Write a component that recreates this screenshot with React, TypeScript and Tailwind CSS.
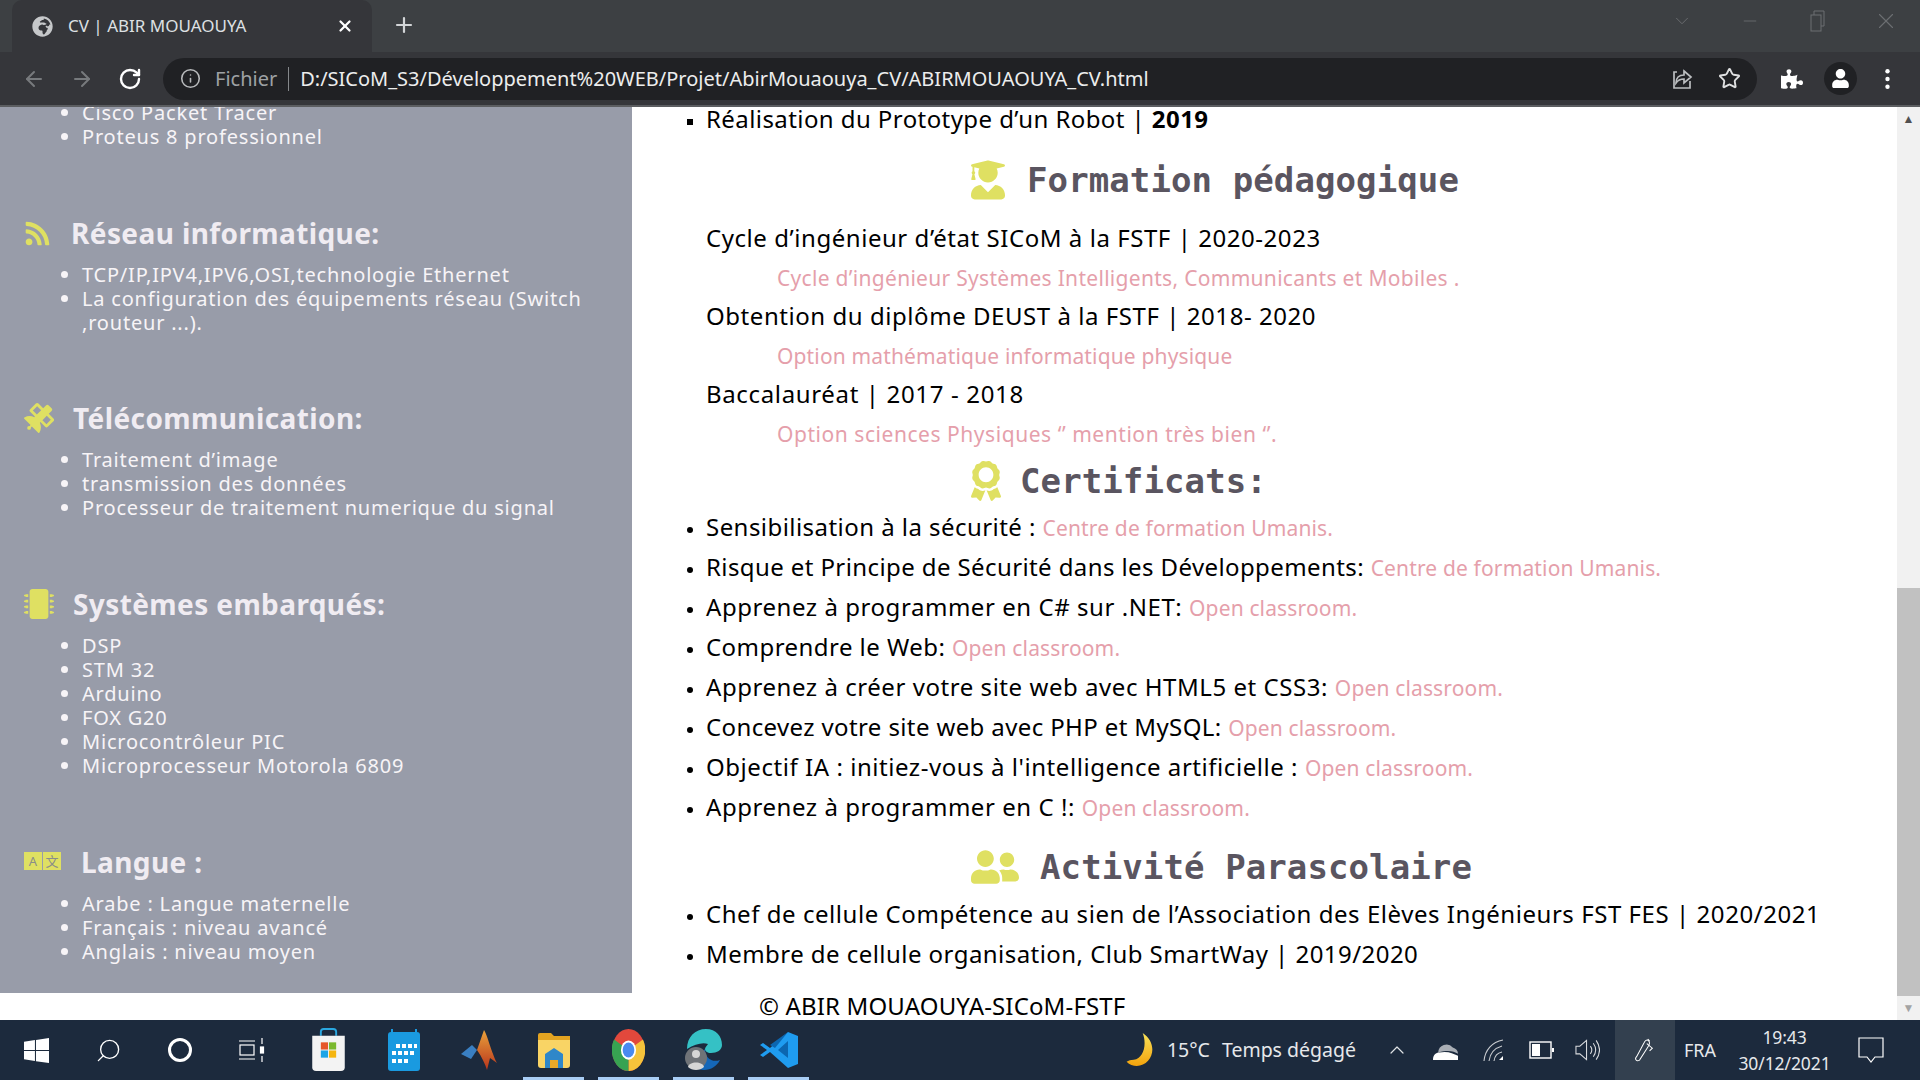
import React from "react";
import { ArrowLeft, ArrowRight, RotateCw, Info, Star, Plus, X, ChevronDown, ChevronUp, Minus, Search } from "lucide-react";
import { FaRss, FaSatellite, FaMicrochip, FaUserGraduate, FaAward, FaUserFriends, FaGlobeAfrica, FaPuzzlePiece, FaUser } from "react-icons/fa";

const sections = [
  { title: "Réseau informatique:", icon: <FaRss className="w-[27px] h-[27px] text-[#dfe062]" />, w: "w-[37px]", mt: "mt-[64px]", items: ["TCP/IP,IPV4,IPV6,OSI,technologie Ethernet", "La configuration des équipements réseau (Switch ,routeur ...)."] },
  { title: "Télécommunication:", icon: <FaSatellite className="w-[30px] h-[30px] text-[#dfe062]" />, w: "w-[39px]", mt: "mt-[63px]", items: ["Traitement d’image", "transmission des données", "Processeur de traitement numerique du signal"] },
  { title: "Systèmes embarqués:", icon: <FaMicrochip className="w-[30px] h-[30px] text-[#dfe062]" />, w: "w-[39px]", mt: "mt-[64px]", items: ["DSP", "STM 32", "Arduino", "FOX G20", "Microcontrôleur PIC", "Microprocesseur Motorola 6809"] },
];

const certs = [
  ["Sensibilisation à la sécurité : ", "Centre de formation Umanis.", "tracking-[0.45px]"],
  ["Risque et Principe de Sécurité dans les Développements: ", "Centre de formation Umanis.", "tracking-[0.4px]"],
  ["Apprenez à programmer en C# sur .NET: ", "Open classroom.", "tracking-[0.55px]"],
  ["Comprendre le Web: ", "Open classroom.", "tracking-[0.45px]"],
  ["Apprenez à créer votre site web avec HTML5 et CSS3: ", "Open classroom.", "tracking-[0.55px]"],
  ["Concevez votre site web avec PHP et MySQL: ", "Open classroom.", "tracking-[0.38px]"],
  ["Objectif IA : initiez-vous à l'intelligence artificielle : ", "Open classroom.", "tracking-[0.55px]"],
  ["Apprenez à programmer en C !: ", "Open classroom.", "tracking-[0.55px]"],
];

function Sidebar() {
  return (
    <aside className="w-[632px] h-[886px] bg-[#989ca9] overflow-hidden text-[#f7f4f7] text-[20px] leading-[24px] font-['Noto_Sans',sans-serif] tracking-[0.8px]">
      <ul className="list-disc pl-[82px] -mt-[6px]">
        <li>Cisco Packet Tracer</li>
        <li>Proteus 8 professionnel</li>
      </ul>
      {sections.map((s) => (
        <section key={s.title} className={s.mt}>
          <h2 className="h-[40px] flex items-center pl-[24px] gap-[10px] text-[28px] tracking-[0.4px] font-bold text-[#f0ecf2]">
            <span className={`${s.w} flex`}>{s.icon}</span>
            {s.title}
          </h2>
          <ul className="list-disc pl-[82px] mt-[10px] pr-[40px]">
            {s.items.map((i) => <li key={i}>{i}</li>)}
          </ul>
        </section>
      ))}
      <section className="mt-[64px]">
        <h2 className="h-[40px] flex items-center pl-[24px] gap-[10px] text-[28px] tracking-[0.4px] font-bold text-[#f0ecf2]">
          <span className="w-[47px] flex gap-[1px] text-[13px] leading-[18px] tracking-normal font-normal text-[#8a8d8a] text-center -mt-[2px]">
            <span className="w-[18px] h-[18px] bg-[#dfe062]">A</span>
            <span className="w-[18px] h-[18px] bg-[#dfe062] font-['Noto_Sans_CJK_SC',sans-serif]">文</span>
          </span>
          Langue :
        </h2>
        <ul className="list-disc pl-[82px] mt-[10px]">
          <li>Arabe : Langue maternelle</li>
          <li>Français : niveau avancé</li>
          <li>Anglais : niveau moyen</li>
        </ul>
      </section>
    </aside>
  );
}

function Heading({ icon, text, className }: { icon: React.ReactNode; text: string; className: string }) {
  return (
    <h2 className={`h-[44px] flex items-center text-[34px] font-bold text-[#5a5560] font-['DejaVu_Sans_Mono',monospace] tracking-[0.1px] ${className}`}>
      {icon}
      {text}
    </h2>
  );
}

const pink = "h-[38px] pl-[71px] text-[21px] leading-[40px] text-[#e59fab]";

function Main() {
  return (
    <main className="flex-1 h-full bg-white text-black text-[24px] leading-[40px] font-['Noto_Sans',sans-serif] tracking-[0.55px]">
      <ul className="list-[square] ml-[74px] marker:text-[18px]">
        <li className="h-[24px] leading-[24px] tracking-[0.42px]">Réalisation du Prototype d’un Robot | <b>2019</b></li>
      </ul>
      <Heading className="mt-[27px] pl-[339px] gap-[22px]" icon={<FaUserGraduate className="w-[34px] h-[40px] text-[#dfe062]" />} text="Formation pédagogique" />
      <div className="pl-[74px] mt-[16px]">
        <p>Cycle d’ingénieur d’état SICoM à la FSTF | 2020-2023</p>
        <p className={`${pink} tracking-[0.3px]`}>Cycle d’ingénieur Systèmes Intelligents, Communicants et Mobiles .</p>
        <p className="h-[40px]">Obtention du diplôme DEUST à la FSTF | 2018- 2020</p>
        <p className={`${pink} tracking-[0.15px]`}>Option mathématique informatique physique</p>
        <p className="h-[40px] tracking-[0.65px]">Baccalauréat | 2017 - 2018</p>
        <p className={`${pink} tracking-[0.55px]`}>Option sciences Physiques ‘’ mention très bien ‘’.</p>
      </div>
      <Heading className="mt-[7px] pl-[339px] gap-[19px]" icon={<FaAward className="w-[30px] h-[40px] text-[#dfe062]" />} text="Certificats:" />
      <ul className="list-disc ml-[74px] mt-[4px] marker:text-[18px]">
        {certs.map(([a, b, t]) => (
          <li key={a} className={t}>{a}<span className="text-[21px] leading-none tracking-[0.15px] text-[#e59fab]">{b}</span></li>
        ))}
      </ul>
      <Heading className="mt-[18px] pl-[339px] gap-[21px]" icon={<FaUserFriends className="w-[48px] h-[40px] text-[#dfe062]" />} text="Activité Parascolaire" />
      <ul className="list-disc ml-[74px] mt-[5px] marker:text-[18px]">
        <li className="whitespace-nowrap">Chef de cellule Compétence au sien de l’Association des Elèves Ingénieurs FST FES | 2020/2021</li>
        <li className="tracking-[0.45px]">Membre de cellule organisation, Club SmartWay | 2019/2020</li>
      </ul>
      <p className="pl-[127px] mt-[12px] tracking-[0.15px]">© ABIR MOUAOUYA-SICoM-FSTF</p>
    </main>
  );
}

function Scrollbar() {
  return (
    <div className="w-[23px] h-full bg-[#f1f1f1] flex flex-col items-center">
      <div className="h-[24px] flex items-center text-[#505050] text-[12px] leading-none">▲</div>
      <div className="h-[457px] shrink-0" />
      <div className="w-full flex-1 bg-[#c1c1c1]" />
      <div className="h-[24px] flex items-center text-[#a3a3a3] text-[12px] leading-none">▼</div>
    </div>
  );
}

function TabBar() {
  return (
    <div className="h-[52px] bg-[#3d4043] flex relative text-[#dde0e3] font-['Noto_Sans',sans-serif]">
      <div className="ml-[12px] w-[360px] h-[52px] bg-[#35363a] rounded-t-[10px] flex items-center px-[20px] text-[17px]">
        <FaGlobeAfrica className="w-[21px] h-[21px] text-[#c6c8ca]" />
        <span className="ml-[15px]">CV | ABIR MOUAOUYA</span>
        <X className="ml-auto -mr-[2px] w-[18px] h-[18px] text-white" strokeWidth={3} />
      </div>
      <Plus className="ml-[20px] mt-[13px] w-[24px] h-[24px] text-[#d3d5d7]" strokeWidth={2.2} />
      <div className="ml-auto flex items-center text-[#6c6f72] h-[42px]">
        <div className="w-[68px] flex justify-center"><ChevronDown className="w-[22px] h-[22px]" strokeWidth={1} /></div>
        <div className="w-[68px] flex justify-center"><Minus className="w-[20px] h-[20px]" strokeWidth={1} /></div>
        <div className="w-[68px] flex justify-center">
          <svg viewBox="0 0 16 22" className="w-[16px] h-[24px]" fill="none" stroke="currentColor" strokeWidth="1"><rect x="1" y="5" width="10" height="16" /><path d="M4 5V1h10v15h-3" /></svg>
        </div>
        <div className="w-[68px] flex justify-center"><X className="w-[26px] h-[26px]" strokeWidth={1} /></div>
      </div>
    </div>
  );
}

function Toolbar() {
  return (
    <div className="h-[55px] bg-[#35363a] border-b-2 border-[#5b5d60] flex items-center font-['Noto_Sans',sans-serif]">
      <ArrowLeft className="ml-[22px] w-[24px] h-[24px] text-[#777a7d]" strokeWidth={2} />
      <ArrowRight className="ml-[24px] w-[24px] h-[24px] text-[#777a7d]" strokeWidth={2} />
      <RotateCw className="ml-[24px] w-[24px] h-[24px] text-white" strokeWidth={2.4} />
      <div className="ml-[21px] w-[1594px] h-[42px] bg-[#202124] rounded-full flex items-center text-[20px] text-[#eceded]">
        <Info className="ml-[17px] w-[21px] h-[21px] text-[#b8babc]" strokeWidth={1.8} />
        <span className="ml-[14px] text-[#9ea1a4]">Fichier</span>
        <span className="mx-[11px] w-px h-[24px] bg-[#85888b]" />
        <span>D:/SICoM_S3/Développement%20WEB/Projet/AbirMouaouya_CV/ABIRMOUAOUYA_CV.html</span>
        <svg viewBox="0 0 24 24" className="ml-auto w-[24px] h-[24px] text-[#bcbec0]" fill="none" stroke="currentColor" strokeWidth="1.7"><path d="M7 5H4v16h16v-7" /><path d="M14 4l7 6-7 6v-4c-4 0-6 1-8 4 0-5 3-8 8-8z" /></svg>
        <Star className="ml-[24px] mr-[16px] w-[23px] h-[23px] text-[#dfe0e1]" strokeWidth={2} />
      </div>
      <FaPuzzlePiece className="ml-[24px] w-[22px] h-[22px] text-white" />
      <span className="ml-[21px] w-[33px] h-[33px] rounded-full bg-[#202124] flex items-center justify-center">
        <FaUser className="w-[17px] h-[19px] text-white" />
      </span>
      <svg viewBox="0 0 4 20" className="ml-[28px] w-[5px] h-[22px] text-white" fill="currentColor"><circle cx="2" cy="3" r="2" /><circle cx="2" cy="10" r="2" /><circle cx="2" cy="17" r="2" /></svg>
    </div>
  );
}

const small = "w-[72px] h-full flex items-center justify-center shrink-0";
const tile = "w-[75px] h-full flex items-center justify-center shrink-0";
const running = "relative w-[75px] h-full flex items-center justify-center shrink-0";

function Taskbar() {
  return (
    <div className="h-[60px] bg-[#1c2a3d] flex items-center text-[#e6e8eb] font-['Noto_Sans',sans-serif]">
      <div className="flex h-full">
        <div className={small}>
          <svg viewBox="0 0 24 24" className="w-[25px] h-[25px]" fill="#fff"><path d="M0 3.5L10.5 2v9.5H0zM11.5 1.8L24 0v11.5H11.5zM0 12.5h10.5V22L0 20.5zM11.5 12.5H24V24l-12.5-1.8z" /></svg>
        </div>
        <div className={small}><Search className="w-[27px] h-[27px] text-white -scale-x-100" strokeWidth={1.2} /></div>
        <div className={small}><span className="w-[24px] h-[24px] rounded-full border-[3.5px] border-white" /></div>
        <div className={small}>
          <svg viewBox="0 0 26 24" className="w-[26px] h-[24px]" fill="none" stroke="#fff" strokeWidth="1.2"><path d="M0 3h16M0 21h16" /><rect x="1" y="7" width="14" height="10" /><path d="M23 0v6M23 18v6" /><rect x="21.5" y="9" width="3" height="6" fill="#fff" /></svg>
        </div>
        <div className={`${tile} ml-[3px]`}>
          <svg viewBox="0 0 36 46" className="w-[35px] h-[44px]"><path d="M10 8V4q0-3 3-3h10q3 0 3 3v4" fill="none" stroke="#2aa7e0" strokeWidth="2" /><path d="M1 8h34v33q0 4-4 4H5q-4 0-4-4z" fill="#f3f3f3" /><rect x="10" y="15" width="7.5" height="7.5" fill="#e6572a" /><rect x="18.5" y="15" width="7.5" height="7.5" fill="#7ab92e" /><rect x="10" y="23.5" width="7.5" height="7.5" fill="#1da5e6" /><rect x="18.5" y="23.5" width="7.5" height="7.5" fill="#f5b50f" /></svg>
        </div>
        <div className={tile}>
          <svg viewBox="0 0 32 42" className="w-[32px] h-[42px]"><rect y="3" width="32" height="39" rx="3" fill="#1a9ae0" /><path d="M4 0v8M28 0v8" stroke="#1a9ae0" strokeWidth="2" /><g fill="#fff"><rect x="8" y="15" width="4" height="4" /><rect x="14" y="15" width="4" height="4" /><rect x="20" y="15" width="4" height="4" /><rect x="26" y="15" width="3" height="4" /><rect x="4" y="22" width="4" height="4" /><rect x="10" y="22" width="4" height="4" /><rect x="16" y="22" width="4" height="4" /><rect x="22" y="22" width="4" height="4" /><rect x="4" y="30" width="4" height="4" /><rect x="10" y="30" width="4" height="4" /><rect x="16" y="30" width="4" height="4" /></g></svg>
        </div>
        <div className={tile}>
          <svg viewBox="0 0 36 40" className="w-[36px] h-[40px]"><defs><linearGradient id="ml" x1="0" y1="0" x2="0" y2="1"><stop offset="0" stopColor="#e9a23b" /><stop offset="1" stopColor="#b8341c" /></linearGradient></defs><path d="M0 24l11-9 5 5-6 9z" fill="#3a7fc2" /><path d="M23 0c3 4 8 24 13 33l-7-5-3 12c-2-6-5-13-10-20z" fill="url(#ml)" /></svg>
        </div>
        <div className={running}>
          <svg viewBox="0 0 32 36" className="w-[32px] h-[36px]"><path d="M0 3q0-2 2-2h11l3 3h16v6H0z" fill="#e2a321" /><path d="M0 8h32v25q0 3-3 3H3q-3 0-3-3z" fill="#f9d465" /><path d="M7 36V22l9-6 9 6v14h-5v-8h-8v8z" fill="#2f87c9" /><rect x="12" y="28" width="8" height="8" fill="#e9a92a" /></svg>
          <span className="absolute bottom-0 left-[7px] right-[7px] h-[3px] bg-[#a8cdf5]" />
        </div>
        <div className={running}>
          <svg viewBox="0 0 48 48" className="w-[33px] h-[42px]" preserveAspectRatio="none"><circle cx="24" cy="24" r="24" fill="#e2483c" /><path d="M24 24L45 12A24 24 0 0 1 24 48z" fill="#f5c33b" /><path d="M24 24L24 48A24 24 0 0 1 3 12z" fill="#37a352" /><circle cx="24" cy="24" r="11" fill="#fff" /><circle cx="24" cy="24" r="8.5" fill="#4a8af0" /></svg>
          <span className="absolute bottom-0 left-[7px] right-[7px] h-[3px] bg-[#a8cdf5]" />
        </div>
        <div className={running}>
          <svg viewBox="0 0 38 42" className="w-[38px] h-[42px]"><path d="M2 20C2 8 10 0 21 0c10 0 16 7 16 16 0 5-5 8-11 8-4 0-6-2-6-4s2-3 3-5c-5-2-13 0-21 5z" fill="#35c1c5" /><path d="M20 20c0 9 7 14 15 11-3 6-9 10-16 10-3 0-6-1-8-3 4-3 4-12 9-18z" fill="#1567b8" /><circle cx="11" cy="29" r="11" fill="#6f7378" /><circle cx="11" cy="25" r="4" fill="#d6d6d6" /><path d="M3 38c1-6 15-6 16 0-4 4-12 4-16 0z" fill="#d6d6d6" /></svg>
          <span className="absolute bottom-0 left-[7px] right-[7px] h-[3px] bg-[#a8cdf5]" />
        </div>
        <div className={running}>
          <svg viewBox="0 0 38 36" className="w-[38px] h-[36px]"><path d="M28 0l10 4v28l-10 4L10 20 3 25l-3-2 7-5-7-5 3-2 7 5z" fill="#1f9cf0" /><path d="M28 0L15 16l-5-3 18-13zM28 9L18 18l10 8z" fill="#0c66b0" /></svg>
          <span className="absolute bottom-0 left-[7px] right-[7px] h-[3px] bg-[#a8cdf5]" />
        </div>
      </div>
      <div className="ml-auto flex items-center h-full text-[19.5px]">
        <svg viewBox="0 0 30 38" className="w-[30px] h-[34px]"><defs><linearGradient id="mo" x1="0" y1="0" x2="0" y2="1"><stop offset="0" stopColor="#f9e25a" /><stop offset="1" stopColor="#f2a20c" /></linearGradient></defs><path d="M18 0c12 8 14 22 6 31-6 7-17 8-24 1 2-1 5-2 8-2 11-2 15-17 10-30z" fill="url(#mo)" /></svg>
        <span className="ml-[12px]">15°C</span>
        <span className="ml-[12px]">Temps dégagé</span>
        <ChevronUp className="ml-[29px] w-[24px] h-[24px] text-[#dfe2e5]" strokeWidth={1.2} />
        <svg viewBox="0 0 24 18" className="ml-[24px] w-[25px] h-[19px]"><path d="M5 11a8 8 0 0 1 14-5c3 1 5 3 5 6-4-2-9-4-19-1z" fill="#a9aeb5" /><path d="M0 18c0-5 3-7 6-7 8-2 13 1 18 3v4z" fill="#fff" /></svg>
        <svg viewBox="0 0 24 24" className="ml-[25px] w-[24px] h-[24px]" fill="none" stroke="#c9ccd0" strokeWidth="1.1"><path d="M1 23C2 12 9 4 20 2M6 23c1-8 6-13 13-15M11 23c.5-4 3-8 8-9" /><path d="M16 22h4v-4" fill="#fff" stroke="none" /></svg>
        <svg viewBox="0 0 26 18" className="ml-[22px] w-[26px] h-[18px]" fill="none" stroke="#fff" strokeWidth="1.4"><rect x="1" y="1" width="21" height="16" /><rect x="3" y="3" width="8" height="12" fill="#fff" stroke="none" /><rect x="23" y="7" width="2" height="4" fill="#fff" stroke="none" /></svg>
        <svg viewBox="0 0 26 24" className="ml-[20px] w-[25px] h-[24px]" fill="none" stroke="#d9dbde" strokeWidth="1.1"><path d="M1 8h4l7-6v20l-7-6H1z" /><path d="M16 8q3 4 0 8M19 5q5 7 0 14M22 2q7 10 0 20" /></svg>
        <div className="ml-[15px] w-[60px] h-full bg-[#33404f] flex items-center justify-center">
          <svg viewBox="0 0 24 28" className="w-[22px] h-[26px]" fill="none" stroke="#fff" strokeWidth="1.1"><path d="M3 21c-3 3 0 6 3 4l9-14c2-3 3-5 1-7s-4 0-5 2z" /><path d="M14 7l6 5-3 3M15 2l2 2" /></svg>
        </div>
        <span className="ml-[9px] text-[18px]">FRA</span>
        <div className="ml-[21px] w-[95px] text-center text-[17.5px] leading-[26px] tracking-[-0.1px]">
          <div>19:43</div>
          <div>30/12/2021</div>
        </div>
        <svg viewBox="0 0 26 26" className="ml-[26px] mr-[36px] w-[26px] h-[26px]" fill="none" stroke="#fff" strokeWidth="1.2"><path d="M1 1h24v19H17l-4 5-4-5H1z" /></svg>
      </div>
    </div>
  );
}

export default function App() {
  return (
    <div className="w-[1920px] h-[1080px] flex flex-col overflow-hidden bg-white">
      <TabBar />
      <Toolbar />
      <div className="h-[913px] flex">
        <div className="flex-1 flex min-w-0 items-start">
          <Sidebar />
          <Main />
        </div>
        <Scrollbar />
      </div>
      <Taskbar />
    </div>
  );
}
